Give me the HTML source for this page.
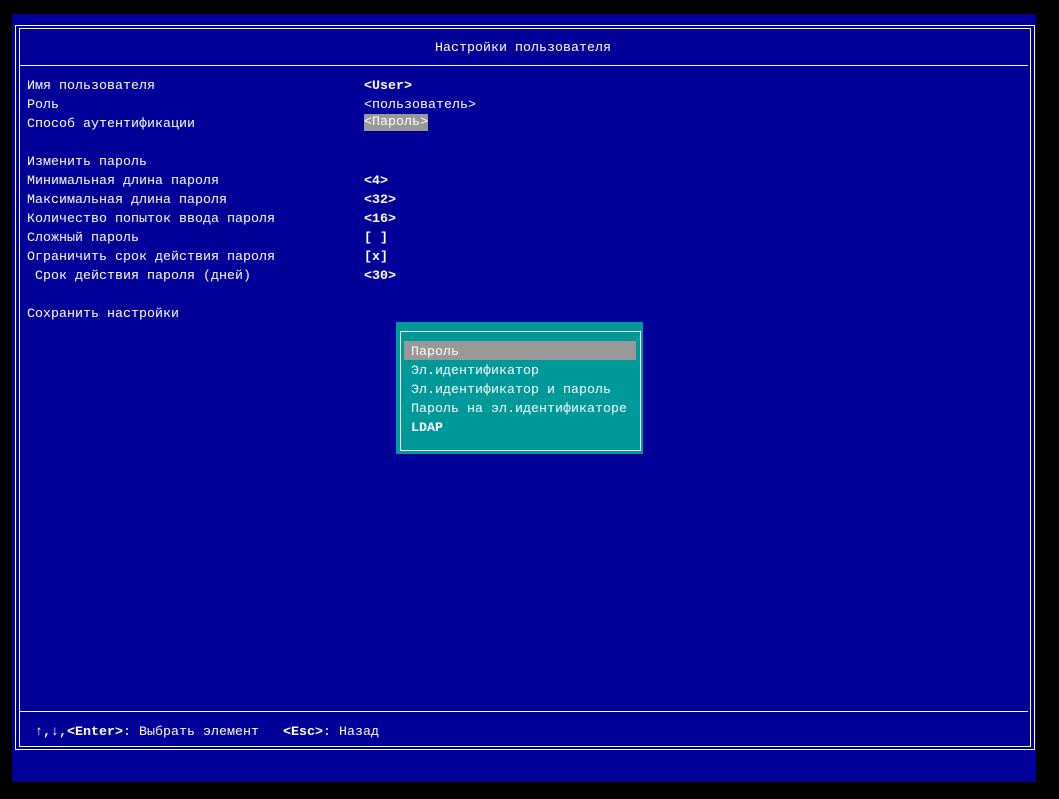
<!DOCTYPE html>
<html><head><meta charset="utf-8"><style>
body{margin:0;background:#000;width:1059px;height:799px;position:relative;overflow:hidden;font-family:"Liberation Mono","DejaVu Sans Mono",monospace;font-size:13.33px;color:#fff}
.blue{position:absolute;left:12px;top:14px;width:1024px;height:768px;background:#000099}
.ln{position:absolute;background:#fff}
.t{position:absolute;white-space:pre;line-height:19px;height:19px;margin-top:2px}
.b{font-weight:bold}
</style></head><body>
<div class="blue"></div>
<div class="ln" style="left:15px;top:25px;width:1020px;height:1px"></div>
<div class="ln" style="left:15px;top:749px;width:1020px;height:1px"></div>
<div class="ln" style="left:15px;top:25px;width:1px;height:725px"></div>
<div class="ln" style="left:1034px;top:25px;width:1px;height:725px"></div>
<div class="ln" style="left:19px;top:28px;width:1012px;height:1px"></div>
<div class="ln" style="left:19px;top:746px;width:1012px;height:1px"></div>
<div class="ln" style="left:19px;top:28px;width:1px;height:719px"></div>
<div class="ln" style="left:1030px;top:28px;width:1px;height:719px"></div>
<div class="ln" style="left:20px;top:65px;width:1008px;height:1px"></div>
<div class="ln" style="left:20px;top:711px;width:1008px;height:1px"></div>

<div class="t" style="left:435px;top:37px">Настройки пользователя</div>

<div class="t" style="left:27px;top:75px">Имя пользователя</div>
<div class="t" style="left:27px;top:94px">Роль</div>
<div class="t" style="left:27px;top:113px">Способ аутентификации</div>
<div class="t" style="left:27px;top:151px">Изменить пароль</div>
<div class="t" style="left:27px;top:170px">Минимальная длина пароля</div>
<div class="t" style="left:27px;top:189px">Максимальная длина пароля</div>
<div class="t" style="left:27px;top:208px">Количество попыток ввода пароля</div>
<div class="t" style="left:27px;top:227px">Сложный пароль</div>
<div class="t" style="left:27px;top:246px">Ограничить срок действия пароля</div>
<div class="t" style="left:27px;top:265px"> Срок действия пароля (дней)</div>
<div class="t" style="left:27px;top:303px">Сохранить настройки</div>

<div class="t b" style="left:364px;top:75px">&lt;User&gt;</div>
<div class="t" style="left:364px;top:94px">&lt;пользователь&gt;</div>
<div class="t" style="left:364px;top:112px;height:17px;line-height:17px;background:#999;width:64px;margin-top:2px">&lt;Пароль&gt;</div>
<div class="t b" style="left:364px;top:170px">&lt;4&gt;</div>
<div class="t b" style="left:364px;top:189px">&lt;32&gt;</div>
<div class="t b" style="left:364px;top:208px">&lt;16&gt;</div>
<div class="t b" style="left:364px;top:227px">[ ]</div>
<div class="t b" style="left:364px;top:246px">[x]</div>
<div class="t b" style="left:364px;top:265px">&lt;30&gt;</div>

<div style="position:absolute;left:396px;top:322px;width:247px;height:132px;background:#009999"></div>
<div style="position:absolute;left:400px;top:331px;width:239px;height:118px;border:1px solid #fff"></div>
<div style="position:absolute;left:404px;top:341px;width:232px;height:19px;background:#999"></div>
<div class="t" style="left:411px;top:341px">Пароль</div>
<div class="t" style="left:411px;top:360px">Эл.идентификатор</div>
<div class="t" style="left:411px;top:379px">Эл.идентификатор и пароль</div>
<div class="t" style="left:411px;top:398px">Пароль на эл.идентификаторе</div>
<div class="t b" style="left:411px;top:417px">LDAP</div>

<div class="t" style="left:35px;top:721px"><b>↑,↓,&lt;Enter&gt;</b>: Выбрать элемент   <b>&lt;Esc&gt;</b>: Назад</div>
</body></html>
